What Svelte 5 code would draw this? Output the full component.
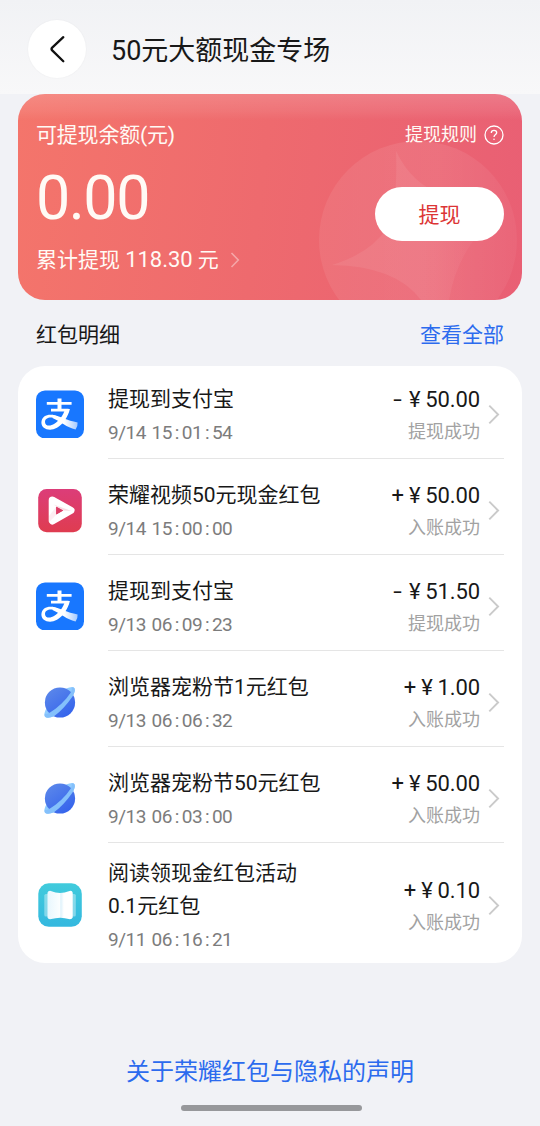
<script>
  const rows = [
    { icon: 'alipay', title: ['提现到支付宝'], date: '9/14', time: '15:01:54', sign: '-', amount: '50.00', status: '提现成功' },
    { icon: 'video', title: ['荣耀视频50元现金红包'], date: '9/14', time: '15:00:00', sign: '+', amount: '50.00', status: '入账成功' },
    { icon: 'alipay', title: ['提现到支付宝'], date: '9/13', time: '06:09:23', sign: '-', amount: '51.50', status: '提现成功' },
    { icon: 'browser', title: ['浏览器宠粉节1元红包'], date: '9/13', time: '06:06:32', sign: '+', amount: '1.00', status: '入账成功' },
    { icon: 'browser', title: ['浏览器宠粉节50元红包'], date: '9/13', time: '06:03:00', sign: '+', amount: '50.00', status: '入账成功' },
    { icon: 'book', title: ['阅读领现金红包活动', '0.1元红包'], date: '9/11', time: '06:16:21', sign: '+', amount: '0.10', status: '入账成功' }
  ];
</script>

<div class="page">
  <header>
    <button class="back" aria-label="返回">
      <svg width="58" height="58" viewBox="0 0 58 58"><path d="M35.3 17.2 24.2 27.6Q22.8 29 24.2 30.4L35.3 41.2" fill="none" stroke="#111" stroke-width="2.3" stroke-linecap="round" stroke-linejoin="round" /></svg>
    </button>
    <h1>50元大额现金专场</h1>
  </header>

  <section class="balance">
    <svg class="deco" width="504" height="206" viewBox="0 0 504 206">
      <defs>
        <linearGradient id="orb" x1="0" y1="0" x2="1" y2="0"><stop offset="0" stop-color="#fff" stop-opacity=".07" /><stop offset=".6" stop-color="#fff" stop-opacity=".09" /><stop offset="1" stop-color="#fff" stop-opacity=".04" /></linearGradient>
        <linearGradient id="star" x1="0" y1="0" x2="1" y2="0"><stop offset="0" stop-color="#fff" stop-opacity=".07" /><stop offset=".5" stop-color="#fff" stop-opacity=".07" /><stop offset="1" stop-color="#fff" stop-opacity="0" /></linearGradient>
      </defs>
      <circle cx="400" cy="146" r="99" fill="url(#orb)" />
      <path d="M378 57Q394 91 426 101L496 112Q442 142 431 206H403Q378 172 314 171Q353 159 369 134Q380 112 378 57Z" fill="url(#star)" />
    </svg>
    <div class="info">
      <div class="label">可提现余额(元)</div>
      <div class="big">0.00</div>
      <div class="total"><span>累计提现 <b>118.30</b> 元</span>
        <svg width="10" height="18" viewBox="0 0 10 18"><path d="m1.5 2 6.8 7-6.8 7" fill="none" stroke="#fff" stroke-opacity=".4" stroke-width="1.6" /></svg>
      </div>
    </div>
    <div class="side">
      <div class="rules">提现规则
        <svg width="20" height="20" viewBox="0 0 20 20" fill="none" stroke="#fff"><circle cx="10" cy="10" r="9" stroke-width="1.3" /><path d="M7.3 8Q7.3 5.4 10 5.4T12.7 7.8C12.7 9.5 10 9.8 10 12" stroke-width="1.3" /><circle cx="10" cy="14.2" r=".8" fill="#fff" stroke="none" /></svg>
      </div>
      <button class="withdraw">提现</button>
    </div>
  </section>

  <div class="section-head"><h2>红包明细</h2><span class="link">查看全部</span></div>

  <ul class="list">
    {#each rows as row}
      <li class:tall={row.title.length > 1}>
        <div class="row">
          <svg class="icon" width="48" height="48" viewBox="0 0 48 48">
            {#if row.icon === 'alipay'}
              <defs><linearGradient id="tail" gradientUnits="userSpaceOnUse" x1="28" y1="0" x2="42" y2="0"><stop offset="0" stop-color="#fff" /><stop offset="1" stop-color="#fff" stop-opacity=".6" /></linearGradient></defs>
              <rect y=".4" width="48" height="48" rx="9" fill="#1877ff" />
              <path d="M10.8 13.4H35.6M15 20.2H32.5" stroke="#fff" stroke-width="2.7" fill="none" />
              <path d="M21.5 8.5H25.5V20.2H21.5Z" fill="#fff" />
              <path d="M29 19H33.9C32 27 27 34.2 21 37.8C13 42.1 5.3 38.4 5.4 32.4C5.6 24.3 15 23 22 26.4L20.8 28.8C14 26.2 9 28.2 9 32C9 36 14 36.8 18.4 33.8C23.4 30.6 27.2 25.6 29 19Z" fill="#fff" />
              <path d="M16.5 24.8C24 26.2 31 30.8 41.6 32.4Q41.9 36.7 39.6 39.6C30.5 37.4 24.8 31.6 16.5 28Z" fill="url(#tail)" />
            {:else if row.icon === 'video'}
              <defs><linearGradient id="vid" x1="0" y1="0" x2="0" y2="1"><stop offset="0" stop-color="#dc3d79" /><stop offset="1" stop-color="#df3c50" /></linearGradient></defs>
              <rect x="2.2" y="3" width="43.6" height="43.2" rx="8.5" fill="url(#vid)" />
              <path d="M16.4 14.2 34.8 24.4 16.4 34.8Z" fill="none" stroke="#fff" stroke-width="7.4" stroke-linejoin="round" />
              <path d="M20.4 21 27.2 24.6 20.4 28.6Z" fill="#dc3d66" />
              <path d="M13 30 20.3 20.6V28.8L13.2 36Z" fill="#f5a9bd" opacity=".2" />
              <path d="m17.5 18.4 18 6.6-8.3-.4Z" fill="#ef9db1" opacity=".35" />
            {:else if row.icon === 'browser'}
              <defs><linearGradient id="globe" x1="0" y1="0" x2=".7" y2="1"><stop offset="0" stop-color="#5f8bea" /><stop offset="1" stop-color="#3564ec" /></linearGradient></defs>
              <path d="M30 10.6Q37.5 7.6 38.6 10.4Q39.5 13 36 19L32 16Z" fill="#91ccff" />
              <path d="M10.5 30Q7.2 36.5 9 38.7Q11.6 41 19 37.8L17 33Z" fill="#91ccff" />
              <circle cx="24" cy="24.5" r="15.1" fill="url(#globe)" />
              <path d="M38.6 10.6Q39.8 14 36 19.3C30.5 27.3 25 33 18 38.3Q11 41 9 38.7Q8.2 37.6 8.8 35.5Q10.5 36.6 14 34.6C22 29.6 29.5 22.5 34.6 14.8Q36.6 11.6 35.6 9.5Q38 9 38.6 10.6Z" fill="#84c0fb" />
            {:else}
              <defs><linearGradient id="book" x1="0" y1="0" x2="0" y2="1"><stop offset="0" stop-color="#41cbdc" /><stop offset="1" stop-color="#34b8df" /></linearGradient>
                <linearGradient id="page" x1="0" x2="1" y1="0" y2="0"><stop offset="0" stop-color="#e8f7fe" /><stop offset=".48" stop-color="#fbfeff" /><stop offset=".53" stop-color="#dff2fb" /><stop offset=".65" stop-color="#fff" /></linearGradient></defs>
              <rect x="2.3" y="2.3" width="43.5" height="43.5" rx="10.5" fill="url(#book)" />
              <rect x="8.3" y="13" width="31.5" height="22.5" rx="1.5" fill="#fff" opacity=".38" />
              <path d="M11.5 11.7Q12 10 14 9.8Q20 12 24 12T34.5 9.8Q36.4 10 36.7 11.7V36.4Q36 38.1 34 38.2Q28 36.6 24 36.7T14 38.2Q12 38 11.5 36.4Z" fill="url(#page)" />
            {/if}
          </svg>
          <div class="desc">
            <div class="title">{#each row.title as line}<div>{line}</div>{/each}</div>
            <div class="date"><span>{row.date}</span><span class="time">{#each row.time.split(':') as part, i}{#if i}<i>:</i>{/if}<span>{part}</span>{/each}</span></div>
          </div>
          <div class="money">
            <div class="amount"><span class="sign" class:minus={row.sign === '-'}>{row.sign}</span><span class="yen">¥</span>{row.amount}</div>
            <div class="status">{row.status}</div>
          </div>
          <svg class="chev" width="12" height="20" viewBox="0 0 12 20"><path d="m1.3 1.7 8.8 8.8-8.8 8.8" fill="none" stroke="#cacaca" stroke-width="1.9" /></svg>
        </div>
      </li>
    {/each}
  </ul>

  <footer>
    <span class="link">关于荣耀红包与隐私的声明</span>
    <div class="bar"></div>
  </footer>
</div>

<style>
  :global(body) { margin: 0; background: #f1f2f6; }
  * { box-sizing: border-box; }
  .page { width: 540px; height: 1126px; display: flex; flex-direction: column; background: #f1f2f6; font-family: Roboto, "Noto Sans CJK SC", sans-serif; color: #181818; overflow: hidden; }
  h1, h2, ul { margin: 0; padding: 0; font-weight: 400; }
  button { border: 0; padding: 0; font: inherit; }
  header { height: 94px; flex: none; display: flex; align-items: center; gap: 25px; padding: 4px 28px 0; background: linear-gradient(#f1f2f5, #f8f8f9); }
  .back { width: 58px; height: 58px; border-radius: 50%; background: #fff; box-shadow: 0 0 2px #0000000d; }
  .back svg { display: block; }
  h1 { font-size: 27px; line-height: 40px; padding-top: 4px; }

  .balance { position: relative; flex: none; display: flex; justify-content: space-between; margin: 0 18px; height: 206px; border-radius: 27px; padding: 0 18px; overflow: hidden; color: #fffaf5; background: linear-gradient(#ffffff28, #ffffff12 17px, #fff0 26px), linear-gradient(97deg, #f4756b, #ee6a6e 48%, #e95f74); }
  .deco { position: absolute; inset: 0; }
  .info, .side { position: relative; display: flex; flex-direction: column; }
  .side { align-items: flex-end; }
  .label { margin-top: 26px; font-size: 21px; line-height: 30px; letter-spacing: -.2px; }
  .big { margin-top: 12px; font-size: 61px; line-height: 72px; letter-spacing: -1.5px; font-family: Roboto; }
  .total { display: flex; align-items: center; gap: 11px; margin-top: 11px; font-size: 21px; line-height: 30px; }
  b { font-weight: 400; font-size: 22px; letter-spacing: -.05px; }
  .rules { display: flex; align-items: center; gap: 7px; margin-top: 27px; font-size: 18px; line-height: 28px; }
  .rules svg { margin-top: -1px; }
  .withdraw { margin-top: 38px; width: 129px; height: 54px; border-radius: 27px; background: #fff; color: #dc3535; font-size: 21px; padding-bottom: 3px; }

  .section-head { display: flex; justify-content: space-between; flex: none; height: 66px; padding: 20px 36px 0; font-size: 21px; line-height: 30px; }
  h2 { font-size: 21px; }
  .link { color: #2c6bee; }

  .list { list-style: none; flex: none; margin: 0 18px; height: 597px; border-radius: 27px; background: #fff; padding: 0 18px; }
  li { height: 96px; padding-top: 4px; }
  li:not(:last-child)::after { content: ""; display: block; height: 1px; margin-left: 72px; background: #e5e5e5; }
  .row { height: 88px; display: flex; align-items: center; }
  .tall { height: 117px; padding-top: 0; }
  .tall .row { height: 117px; }
  .icon { flex: none; margin-right: 24px; }
  .desc { flex: 1; }
  .title { font-size: 21px; line-height: 33px; }
  .date { display: flex; gap: 5.5px; font-size: 19px; line-height: 25px; margin: 4px 0 1px; color: #7c7c7c; letter-spacing: -.45px; }
  .time { display: flex; }
  i { font-style: normal; width: 9.7px; text-align: center; }
  .money { text-align: right; }
  .amount { display: flex; justify-content: flex-end; align-items: center; font-size: 22px; line-height: 33px; letter-spacing: -.1px; }
  .yen { width: 21px; text-align: center; }
  .sign { width: 13px; text-align: center; }
  .minus { transform: scaleX(1.4); }
  .status { font-size: 18px; line-height: 27px; margin-top: 2px; color: #a2a2a2; }
  .chev { flex: none; margin-left: 8px; margin-right: 4px; }

  footer { display: flex; flex-direction: column; align-items: center; margin-top: 91px; font-size: 24px; line-height: 36px; }
  .bar { width: 181px; height: 6px; margin-top: 15px; margin-left: 2px; border-radius: 3px; background: #97989b; }
</style>
